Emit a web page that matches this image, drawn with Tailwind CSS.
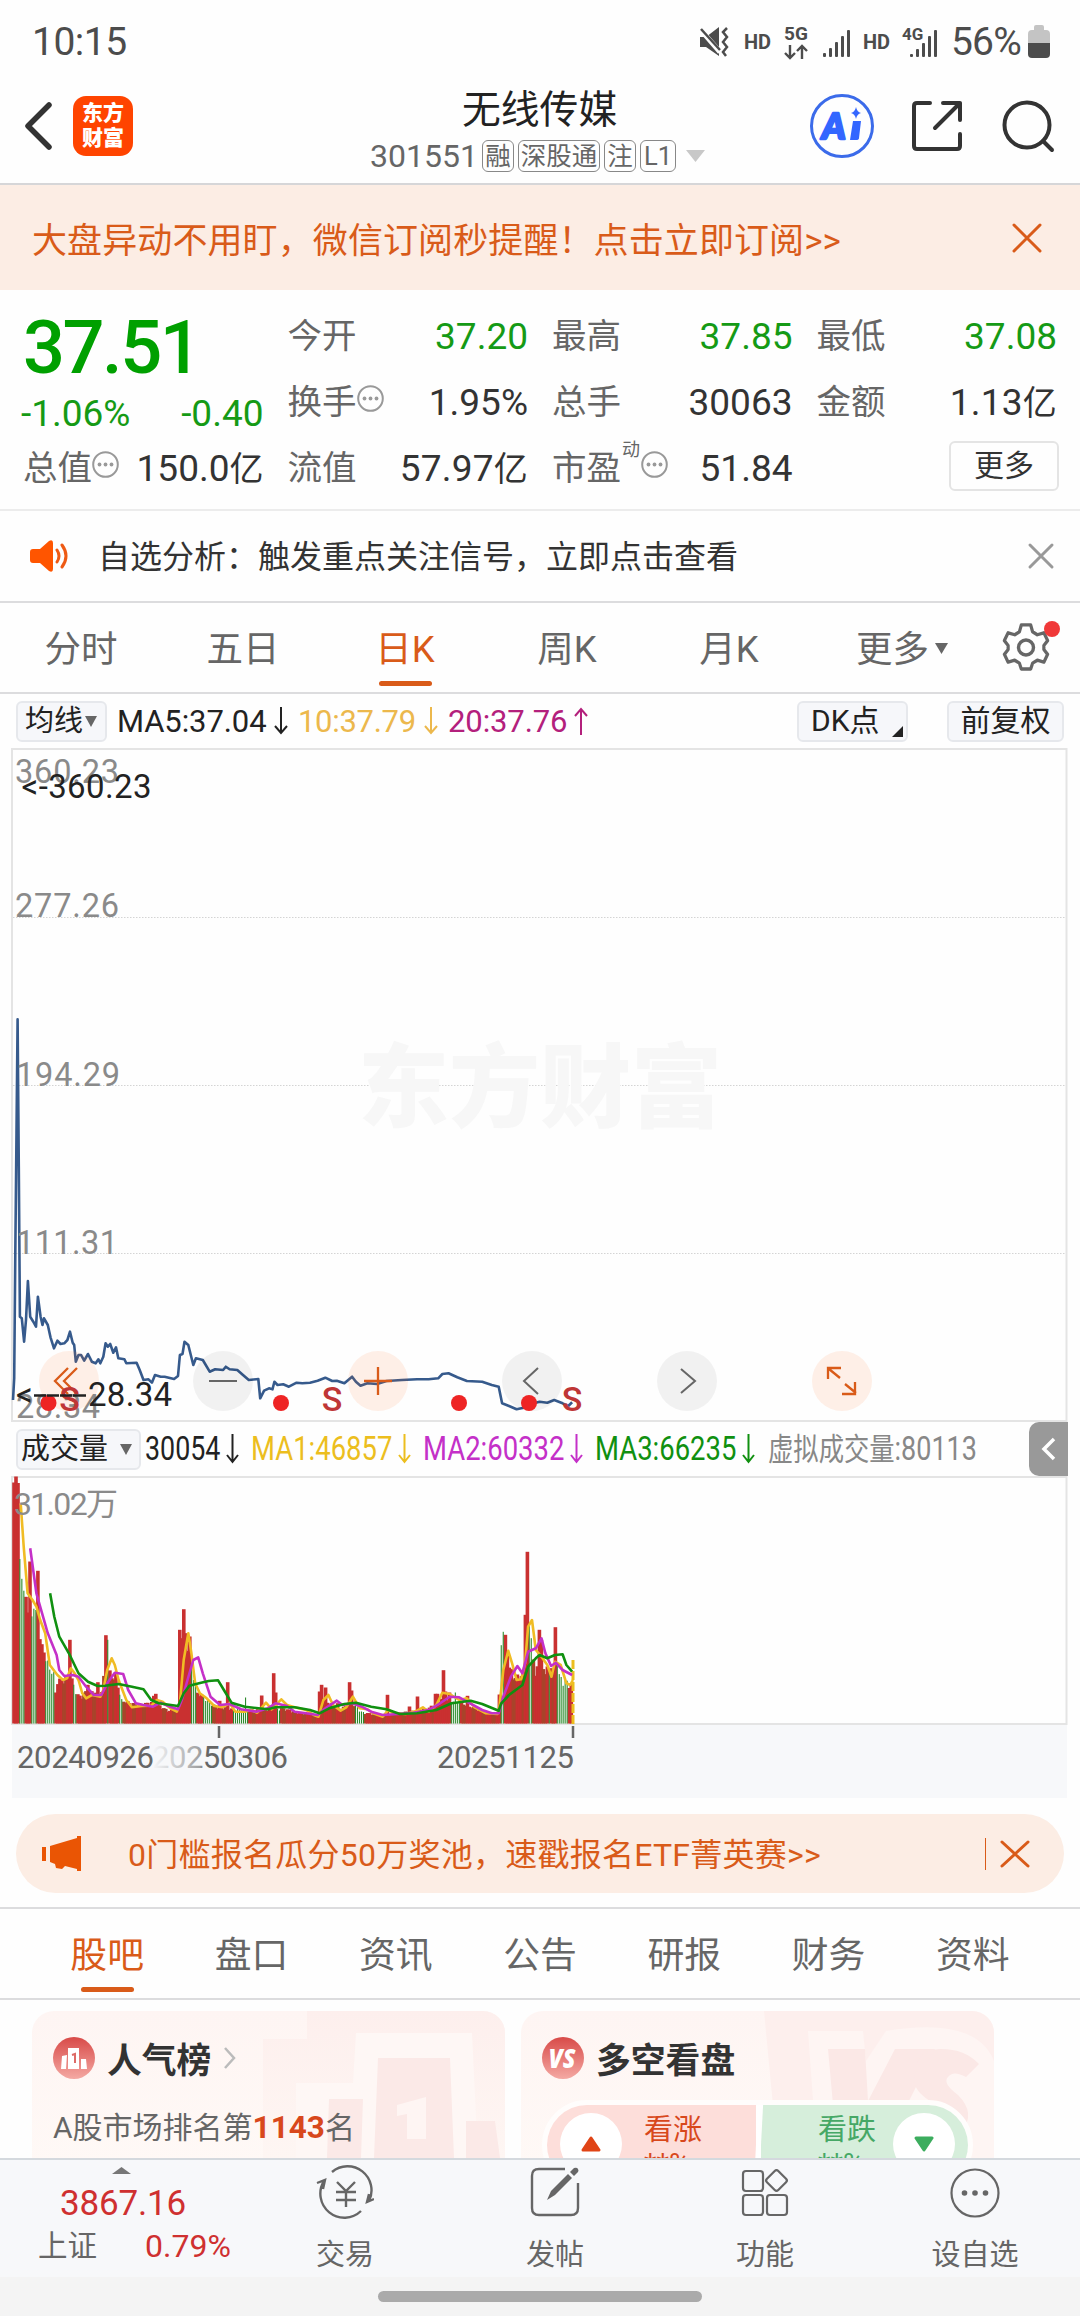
<!DOCTYPE html>
<html lang="zh-CN">
<head>
  <meta charset="UTF-8" />
  <meta name="viewport" content="width=device-width, initial-scale=1.0" />
  <title>无线传媒 301551</title>
  <script src="https://cdn.jsdelivr.net/npm/@tailwindcss/browser@4"></script>
</head>
<body class="w-[1080px] h-[2316px] overflow-hidden flex flex-col bg-[#fefefe] text-[#333] font-['Roboto','Noto_Sans_CJK_SC',sans-serif] leading-none whitespace-nowrap">

  <!-- Statusleiste -->
  <div class="h-[66px] shrink-0 flex items-start justify-between pl-8 pr-[30px] text-[#4c4c4c]">
    <div class="text-[39px] leading-[44px] mt-[20px] tracking-[-0.5px]">10:15</div>
    <div class="flex items-start">
      <svg class="w-[32px] h-[32px] mt-[26px] mr-[2px]" viewBox="0 0 32 32" fill="none" stroke="#4c4c4c">
        <path d="M1 11h6L20 1v29L7 21H1z" fill="#4c4c4c" stroke="none"/>
        <path d="M0 2l21 24" stroke="#fefefe" stroke-width="5"/>
        <path d="M2 3l19 21" stroke-width="2.5"/>
        <path d="M28 2l-4 4 4 5-4 5 4 5-4 5 3 4" stroke-width="2.5"/>
      </svg>
      <div class="ml-[11px] w-[28px] text-[20px] font-bold leading-6 mt-[30px]">HD</div>
      <div class="ml-[12px] w-[26px] mt-[26px]">
        <div class="text-[19px] font-bold leading-4">5G</div>
        <svg class="w-6 h-4 mt-[2px]" viewBox="0 0 24 16" fill="none" stroke="#4c4c4c" stroke-width="2.4"><path d="M6 1v13M1 9l5 5 5-5M18 15V2M13 7l5-5 5 5"/></svg>
      </div>
      <svg class="ml-[13px] w-[28px] h-[28px] mt-[30px]" viewBox="0 0 28 28" fill="#4c4c4c"><rect x="0" y="23" width="3" height="4" rx="1"/><rect x="6" y="18" width="3" height="9" rx="1"/><rect x="12" y="12" width="3" height="15" rx="1"/><rect x="18" y="6" width="3" height="21" rx="1"/><rect x="24" y="0" width="3" height="27" rx="1"/></svg>
      <div class="ml-[12px] w-[28px] text-[20px] font-bold leading-6 mt-[30px]">HD</div>
      <div class="relative ml-[11px] w-[37px] h-[58px]">
        <div class="absolute left-0 top-[26px] text-[17px] font-bold leading-4">4G</div>
        <svg class="absolute left-[8px] top-[30px] w-[28px] h-[28px]" viewBox="0 0 28 28" fill="#4c4c4c"><rect x="0" y="24" width="3" height="3" rx="1"/><rect x="6" y="19" width="3" height="8" rx="1"/><rect x="12" y="13" width="3" height="14" rx="1"/><rect x="18" y="6" width="3" height="21" rx="1"/><rect x="24" y="0" width="3" height="27" rx="1"/></svg>
      </div>
      <div class="ml-[12px] w-[77px] text-[39px] leading-[44px] mt-[20px] tracking-[-0.8px]">56%</div>
      <svg class="w-[22px] h-[34px] mt-[25px]" viewBox="0 0 22 34"><path d="M6 2q0-2 2-2h6q2 0 2 2v3h2q4 0 4 4v9H0V9q0-4 4-4h2z" fill="#c4c4c4"/><path d="M0 18h22v11q0 4-4 4H4q-4 0-4-4z" fill="#4c4c4c"/></svg>
    </div>
  </div>

  <!-- Kopfzeile -->
  <div class="h-[119px] shrink-0 relative flex items-start justify-between pl-[23px] pr-[25px] border-b-2 border-[#d6d6d8]">
    <div class="flex items-center mt-[30px] h-[60px]">
      <svg class="w-[29px] h-[50px]" viewBox="0 0 29 50" fill="none" stroke="#333" stroke-width="5.5" stroke-linecap="round" stroke-linejoin="round"><path d="M26 4L5 25l21 21"/></svg>
      <div class="ml-[21px] w-[60px] h-[60px] rounded-[13px] bg-[#ff4400] text-white text-[21px] font-black leading-[25px] text-center pt-[5px]">东方<br>财富</div>
    </div>
    <div class="absolute left-[370px] top-[22px]">
      <div class="ml-[92px] text-[38.8px] leading-[44px] text-[#222]">无线传媒</div>
      <div class="flex items-center mt-[6px] h-[36px] text-[#666]">
        <div class="text-[32px] w-[112px]">301551</div>
        <div class="flex gap-[4px] text-[25.500px]">
          <span class="border-[1.5px] border-[#888] rounded-md w-[32px] h-[32px] leading-[30px] text-center">融</span>
          <span class="border-[1.5px] border-[#888] rounded-md w-[82px] h-[32px] leading-[30px] text-center">深股通</span>
          <span class="border-[1.5px] border-[#888] rounded-md w-[32px] h-[32px] leading-[30px] text-center">注</span>
          <span class="border-[1.5px] border-[#888] rounded-md w-[36px] h-[32px] leading-[30px] text-center">L1</span>
        </div>
        <svg class="ml-[10px] w-[19px] h-[12px]" viewBox="0 0 19 12"><path d="M0 0h19l-9.500 12z" fill="#c8c8c8"/></svg>
      </div>
    </div>
    <div class="flex items-center mt-[26px] h-[68px]">
      <svg class="w-[66px] h-[66px]" viewBox="0 0 66 66">
        <circle cx="33" cy="33" r="30.500" fill="none" stroke="#3b6bea" stroke-width="3"/>
        <text x="13" y="46" font-family="Lato, sans-serif" font-weight="900" font-style="italic" font-size="36" fill="#3366ff" stroke="#3366ff" stroke-width="2.500" stroke-linejoin="round">A</text>
        <path d="M44 28h8l-2 17q0 2-3 2h-6z" fill="#3366ff"/>
        <path d="M47 14q1 5 5 6-4 1-5 6-1-5-5-6 4-1 5-6z" fill="#3366ff"/>
      </svg>
      <svg class="ml-[36px] w-[52px] h-[52px]" viewBox="0 0 52 52" fill="none" stroke="#333" stroke-width="4" stroke-linecap="round" stroke-linejoin="round"><path d="M19 3H6Q3 3 3 6v40q0 3 3 3h40q3 0 3-3V34M32 3h17v17M49 3L24 28"/></svg>
      <svg class="ml-[38px] w-[54px] h-[54px]" viewBox="0 0 54 54" fill="none" stroke="#333" stroke-width="4" stroke-linecap="round"><circle cx="26" cy="26" r="22.500"/><path d="M42 42l9 9"/></svg>
    </div>
  </div>

  <!-- Hinweisbanner -->
  <div class="h-[105px] shrink-0 flex items-center justify-between bg-[#fcede4] pl-[32px] pr-[38px] text-[#d95b19]">
    <div class="pt-2 text-[35px] tracking-[0.1px]">大盘异动不用盯，微信订阅秒提醒！点击立即订阅&gt;&gt;</div>
    <svg class="w-[30px] h-[30px]" viewBox="0 0 30 30" stroke="#d95b19" stroke-width="3" stroke-linecap="round"><path d="M2 2l26 26M28 2L2 28"/></svg>
  </div>

  <!-- Kursdaten -->
  <div class="h-[221px] shrink-0 flex gap-[24px] px-[23px] pt-[13px] border-b-2 border-[#ececec] text-[37px]">
    <div class="w-[241px]">
      <div class="h-[89px] pt-[5px] text-[74px] font-medium leading-[80px] text-[#00a000] tracking-[-2.500px]">37.51</div>
      <div class="h-[43px] flex items-center justify-between text-[#159a15] -ml-[2px]"><span>-1.06%</span><span>-0.40</span></div>
      <div class="h-[66px] flex items-center justify-between">
        <span class="flex items-center text-[34.500px] text-[#666]">总值<svg class="mb-2 w-[27px] h-[27px]" viewBox="0 0 27 27" fill="#999"><circle cx="13.500" cy="13.500" r="12.300" fill="none" stroke="#999" stroke-width="2"/><circle cx="7.500" cy="13.500" r="1.900"/><circle cx="13.500" cy="13.500" r="1.900"/><circle cx="19.500" cy="13.500" r="1.900"/></svg></span>
        <span>150.0<span class="text-[34px]">亿</span></span>
      </div>
    </div>
    <div class="w-[241px]">
      <div class="h-[66px] flex items-center justify-between"><span class="text-[34.500px] text-[#666]">今开</span><span class="text-[#159a15]">37.20</span></div>
      <div class="h-[66px] flex items-center justify-between">
        <span class="flex items-center text-[34.500px] text-[#666]">换手<svg class="mb-2 w-[27px] h-[27px]" viewBox="0 0 27 27" fill="#999"><circle cx="13.500" cy="13.500" r="12.300" fill="none" stroke="#999" stroke-width="2"/><circle cx="7.500" cy="13.500" r="1.900"/><circle cx="13.500" cy="13.500" r="1.900"/><circle cx="19.500" cy="13.500" r="1.900"/></svg></span>
        <span>1.95%</span>
      </div>
      <div class="h-[66px] flex items-center justify-between"><span class="text-[34.500px] text-[#666]">流值</span><span class="tracking-[0.2px]">57.97<span class="text-[34px]">亿</span></span></div>
    </div>
    <div class="w-[241px]">
      <div class="h-[66px] flex items-center justify-between"><span class="text-[34.500px] text-[#666]">最高</span><span class="text-[#159a15]">37.85</span></div>
      <div class="h-[66px] flex items-center justify-between"><span class="text-[34.500px] text-[#666]">总手</span><span>30063</span></div>
      <div class="h-[66px] flex items-center justify-between">
        <span class="flex items-center text-[34.500px] text-[#666]">市盈<span class="text-[18px] mb-9 ml-[1px]">动</span><svg class="ml-[1px] mb-2 w-[27px] h-[27px]" viewBox="0 0 27 27" fill="#999"><circle cx="13.500" cy="13.500" r="12.300" fill="none" stroke="#999" stroke-width="2"/><circle cx="7.500" cy="13.500" r="1.900"/><circle cx="13.500" cy="13.500" r="1.900"/><circle cx="19.500" cy="13.500" r="1.900"/></svg></span>
        <span>51.84</span>
      </div>
    </div>
    <div class="w-[241px]">
      <div class="h-[66px] flex items-center justify-between"><span class="text-[34.500px] text-[#666]">最低</span><span class="text-[#159a15]">37.08</span></div>
      <div class="h-[66px] flex items-center justify-between"><span class="text-[34.500px] text-[#666]">金额</span><span class="tracking-[0.2px]">1.13<span class="text-[34px]">亿</span></span></div>
      <div class="h-[66px] flex items-center justify-end"><button class="w-[110px] h-[50px] mb-1 -mr-[2px] border-2 border-[#e4e4e4] rounded-md text-[30px] leading-[46px]">更多</button></div>
    </div>
  </div>

  <!-- Analyse -->
  <div class="h-[92px] shrink-0 flex items-center pl-[29px] pr-[25px] border-b-2 border-[#dcdcde]">
    <svg class="w-[40px] h-[34px]" viewBox="0 0 40 34" fill="#ff5500"><path d="M4 10h7L20 2q4-2 4 2v26q0 4-4 2l-9-8H4q-3 0-3-3v-8q0-3 3-3z"/><path d="M28 11q4 6 0 12M33 6q8 11 0 22" fill="none" stroke="#ee5a14" stroke-width="3" stroke-linecap="round"/></svg>
    <div class="ml-[29px] pt-[2px] text-[32px]">自选分析：触发重点关注信号，立即点击查看</div>
    <svg class="ml-auto w-[28px] h-[28px]" viewBox="0 0 28 28" stroke="#999" stroke-width="3" stroke-linecap="round"><path d="M3 3l22 22M25 3L3 25"/></svg>
  </div>

  <!-- Zeitraum-Tabs -->
  <div class="h-[91px] shrink-0 flex items-start border-b-2 border-[#dcdcde] text-[36.500px] text-[#666]">
    <div class="w-[162px] leading-[94px] text-center">分时</div>
    <div class="w-[162px] leading-[94px] text-center">五日</div>
    <div class="w-[162px] text-center text-[#d95b19]">
      <div class="h-[78px] leading-[94px]">日K</div>
      <div class="mx-auto w-[53px] h-[5px] rounded-full bg-[#d95b19]"></div>
    </div>
    <div class="w-[162px] leading-[94px] text-center">周K</div>
    <div class="w-[162px] leading-[94px] text-center">月K</div>
    <div class="w-[184px] h-[94px] flex items-center justify-center">更多<svg class="ml-[6px] mb-1 w-[13px] h-[11px]" viewBox="0 0 13 11"><path d="M0 0h13L6.500 11z" fill="#666"/></svg></div>
    <div class="relative mt-[19px] w-[56px] h-[50px] ml-[7px]">
      <svg class="w-[50px] h-[50px]" viewBox="0 0 50 50" fill="none" stroke="#666" stroke-width="3.400" stroke-linejoin="round">
        <path d="M20 3h10l2 7 5 3 7-2 4 8-4 5v4l4 5-4 8-7-2-5 3-2 6H20l-2-6-5-3-7 2-4-8 4-5v-4l-4-5 4-8 7 2 5-3z" transform="translate(1.500 0) scale(.94 .98)"/>
        <circle cx="25" cy="25.500" r="7.500"/>
      </svg>
      <div class="absolute left-[43px] -top-[1px] w-4 h-4 rounded-full bg-[#f03838]"></div>
    </div>
  </div>

  <!-- MA-Zeile -->
  <div class="h-[54px] shrink-0 flex items-center pl-[16px] pr-[16px] text-[31px]">
    <div class="w-[91px] h-[41px] flex items-center pl-[7px] border-2 border-[#e6e8ec] rounded-md bg-[#f6f7fa] text-[29px] text-[#222]">均线<svg class="ml-[2px] w-[12px] h-[11px]" viewBox="0 0 12 11"><path d="M0 0h12L6 11z" fill="#666"/></svg></div>
    <div class="ml-[10px] w-[157px] text-[#222] tracking-[-0.1px]">MA5:37.04</div>
    <svg class="w-[14px] h-[28px]" viewBox="0 0 14 28" fill="none" stroke="#222" stroke-width="2"><path d="M7 0v26M1 19l6 7 6-7"/></svg>
    <div class="ml-[10px] w-[126px] text-[#ecb84c] tracking-[-0.3px]">10:37.79</div>
    <svg class="w-[14px] h-[28px]" viewBox="0 0 14 28" fill="none" stroke="#ecb84c" stroke-width="2"><path d="M7 0v26M1 19l6 7 6-7"/></svg>
    <div class="ml-[10px] w-[126px] text-[#b3207c] tracking-[-0.1px]">20:37.76</div>
    <svg class="w-[14px] h-[28px]" viewBox="0 0 14 28" fill="none" stroke="#b3207c" stroke-width="2"><path d="M7 28V2M1 9l6-7 6 7"/></svg>
    <div class="ml-auto relative w-[111px] h-[41px] flex items-center pl-[12px] border-2 border-[#e6e8ec] rounded-md bg-[#f6f7fa] text-[30px] text-[#222]">DK点<svg class="absolute right-[3px] bottom-[3px] w-[11px] h-[11px]" viewBox="0 0 11 11"><path d="M11 0v11H0z" fill="#222"/></svg></div>
    <div class="ml-[39px] w-[117px] h-[41px] flex items-center justify-center border-2 border-[#e6e8ec] rounded-md bg-[#f6f7fa] text-[30px] text-[#222]">前复权</div>
  </div>

  <!-- Kurschart -->
  <svg class="block w-[1080px] h-[674px] shrink-0" viewBox="0 748 1080 674">
    <rect x="12" y="749" width="1054.500" height="672" fill="none" stroke="#e4e4e4" stroke-width="2"/>
    <g stroke="#d4d4d4" stroke-width="1" stroke-dasharray="1.500 1.500"><path d="M13 917.500H1066M13 1085.500H1066M13 1253.500H1066"/></g>
    <text x="358" y="1120" font-size="91" font-weight="900" fill="#f7f7f7">东方财富</text>
    <polyline id="price" fill="none" stroke="#365a8c" stroke-width="2.600" stroke-linejoin="round"/>
    <g>
      <circle cx="69" cy="1381" r="30" fill="#ff6a20" fill-opacity=".1"/>
      <circle cx="223" cy="1381" r="30" fill="#000" fill-opacity=".05"/>
      <circle cx="378" cy="1381" r="30" fill="#ff6a20" fill-opacity=".1"/>
      <circle cx="532" cy="1381" r="30" fill="#000" fill-opacity=".05"/>
      <circle cx="687" cy="1381" r="30" fill="#000" fill-opacity=".05"/>
      <circle cx="842" cy="1381" r="30" fill="#ff6a20" fill-opacity=".1"/>
    </g>
    <g fill="none" stroke="#d95b19" stroke-width="2.300">
      <path d="M68 1368l-13 13 13 13M77 1368l-13 13 13 13"/>
      <path d="M364 1381h28M378 1367v28"/>
      <path d="M840 1378L829 1369M828 1379v-11h13M845 1384l11 9M855 1382v12h-13"/>
    </g>
    <g fill="none" stroke="#666" stroke-width="2"><path d="M209 1381h28M538 1368l-14 13 14 13M681 1369l14 12-14 12"/></g>
    <g font-size="32.500" fill="#8a8a8a">
      <text x="15" y="783" textLength="104">360.23</text>
      <text x="15" y="917" textLength="104">277.26</text>
      <text x="16" y="1086" textLength="104">194.29</text>
      <text x="16" y="1254" textLength="102">111.31</text>
      <text x="16" y="1417.500" textLength="84">28.34</text>
    </g>
    <g fill="#ee2424"><circle cx="48.500" cy="1403" r="8"/><circle cx="281" cy="1403" r="8"/><circle cx="459" cy="1403" r="8"/><circle cx="529" cy="1403" r="8"/></g>
    <g font-size="34" font-weight="500" fill="#bf3636" text-anchor="middle"><text x="69.500" y="1410.500">S</text><text x="332" y="1410.500">S</text><text x="572" y="1410.500">S</text></g>
    <g font-size="33" fill="#222">
      <text x="21.500" y="798" textLength="130">&lt;-360.23</text>
      <text x="16" y="1405.500">&lt;</text>
      <path d="M34 1395.500h12M47 1395.500h12M60 1395.500h12M73 1395.500h13" stroke="#222" stroke-width="2.500"/>
      <text x="88" y="1405.500" textLength="84">28.34</text>
    </g>
  </svg>

  <!-- Volumenzeile -->
  <div class="h-[54px] shrink-0 flex items-center pl-[16px] text-[32.500px]">
    <div class="w-[125px] h-[41px] flex items-center pl-[3px] border-2 border-[#e6e8ec] rounded-md bg-[#f6f7fa] text-[29px] text-[#222]">成交量<svg class="ml-[12px] w-[12px] h-[11px]" viewBox="0 0 12 11"><path d="M0 0h12L6 11z" fill="#666"/></svg></div>
    <div class="ml-[4px] w-[81px] text-[#222]"><div class="origin-left scale-x-[0.825]">30054</div></div>
    <svg class="w-[13px] h-[30px]" viewBox="0 0 13 30" fill="none" stroke="#222" stroke-width="2"><path d="M6.500 0v28M1 21l5.500 7 5.500-7"/></svg>
    <div class="ml-[12px] w-[147px] text-[#ecbe1e]"><div class="origin-left scale-x-[0.845]">MA1:46857</div></div>
    <svg class="w-[13px] h-[30px]" viewBox="0 0 13 30" fill="none" stroke="#ecbe1e" stroke-width="2"><path d="M6.500 0v28M1 21l5.500 7 5.500-7"/></svg>
    <div class="ml-[12px] w-[147px] text-[#c430c8]"><div class="origin-left scale-x-[0.845]">MA2:60332</div></div>
    <svg class="w-[13px] h-[30px]" viewBox="0 0 13 30" fill="none" stroke="#c430c8" stroke-width="2"><path d="M6.500 0v28M1 21l5.500 7 5.500-7"/></svg>
    <div class="ml-[12px] w-[147px] text-[#109010]"><div class="origin-left scale-x-[0.845]">MA3:66235</div></div>
    <svg class="w-[13px] h-[30px]" viewBox="0 0 13 30" fill="none" stroke="#109010" stroke-width="2"><path d="M6.500 0v28M1 21l5.500 7 5.500-7"/></svg>
    <div class="ml-[13px] w-[210px] text-[#888]"><div class="origin-left scale-x-[0.83]"><span class="text-[30.500px]">虚拟成交量</span>:80113</div></div>
    <div class="ml-auto mr-[12px] w-[39px] h-[54px] shrink-0 rounded-l-[10px] bg-[#999] flex items-center justify-center"><svg class="w-[15px] h-[24px]" viewBox="0 0 15 24" fill="none" stroke="#fff" stroke-width="3.500"><path d="M13 2L3 12l10 10"/></svg></div>
  </div>

  <!-- Volumenchart -->
  <svg class="block w-[1080px] h-[249px] shrink-0" viewBox="0 1476 1080 249">
    <rect x="12" y="1477" width="1054.500" height="247" fill="none" stroke="#e4e4e4" stroke-width="2"/>
    <g id="bars"></g>
    <path d="M573 1660v64" stroke="#ecbe1e" stroke-width="3" stroke-dasharray="9 2"/>
    <g fill="none" stroke-width="2.600" stroke-linejoin="round">
      <polyline id="ma1" stroke="#f0bc24"/>
      <polyline id="ma2" stroke="#c430c8"/>
      <polyline id="ma3" stroke="#109010"/>
    </g>
    <text x="14" y="1515" font-size="32" fill="#8a8a8a" textLength="104">31.02万</text>
  </svg>

  <!-- Datumsachse -->
  <div class="h-[73px] shrink-0 ml-[12px] w-[1055px] bg-[#f7f8fa]">
    <svg class="block w-[1055px] h-[73px]" viewBox="12 1725 1055 73">
      <defs><linearGradient id="fade" x1="0" x2="1"><stop offset="0" stop-color="#666" stop-opacity="0"/><stop offset=".35" stop-color="#666" stop-opacity=".6"/><stop offset=".4" stop-color="#666"/></linearGradient></defs>
      <path d="M219 1726v12M573 1726v12" stroke="#666" stroke-width="2.500"/>
      <g font-size="31" fill="#666">
        <text x="17" y="1768" textLength="137">20240926</text>
        <text x="152" y="1768" textLength="136" fill="url(#fade)">20250306</text>
        <text x="437" y="1768" textLength="137">20251125</text>
      </g>
    </svg>
  </div>

  <!-- Aktion -->
  <div class="mt-[16px] mx-[16px] h-[79px] shrink-0 rounded-full bg-[#fcede4] flex items-center pl-[25px] pr-[34px] text-[#d95b19]">
    <svg class="w-[41px] h-[36px]" viewBox="0 0 41 36" fill="#ea5504"><rect x="1" y="11" width="4" height="14"/><path d="M9 10L36 2V0h4v35h-4v-2l-12-3-3 3-6-1-1-4-5-2z"/></svg>
    <div class="ml-[46px] pt-[2px] text-[32px] tracking-[0.25px]">0门槛报名瓜分50万奖池，速戳报名ETF菁英赛&gt;&gt;</div>
    <div class="ml-auto w-[1.500px] h-[32px] bg-[#d95b19]"></div>
    <svg class="ml-[14px] w-[30px] h-[28px]" viewBox="0 0 30 28" stroke="#d95b19" stroke-width="3" stroke-linecap="round"><path d="M2 2l26 24M28 2L2 26"/></svg>
  </div>

  <!-- Inhalts-Tabs -->
  <div class="mt-[14px] h-[93px] shrink-0 flex px-[35px] border-y-2 border-[#dcdcde] text-[36.800px] text-[#666] text-center leading-[93px]">
    <div class="flex-1 text-[#d95b19]">
      <div class="h-[78px]">股吧</div>
      <div class="mx-auto w-[53px] h-[5px] rounded-full bg-[#d95b19]"></div>
    </div>
    <div class="flex-1">盘口</div>
    <div class="flex-1">资讯</div>
    <div class="flex-1">公告</div>
    <div class="flex-1">研报</div>
    <div class="flex-1">财务</div>
    <div class="flex-1">资料</div>
  </div>

  <!-- Karten -->
  <div class="h-[158px] shrink-0 overflow-hidden flex gap-4 pl-[32px] pt-[11px]">
    <div class="relative w-[473px] h-[200px] shrink-0 rounded-[22px] bg-linear-to-b from-[#fef5f3] to-[#fffaf7] overflow-hidden">
      <svg class="absolute left-0 top-0 w-[473px] h-[147px]" viewBox="0 0 473 147">
        <defs><linearGradient id="soft" x2="0" y2="1"><stop stop-color="#fdefed"/><stop offset="1" stop-color="#fef6f3"/></linearGradient></defs>
        <path d="M275 0h198v147H231V28h44z" fill="url(#soft)"/>
        <path d="M264 147V72h57l3-50h116l6 125z" fill="#fef7f5"/>
        <path d="M295 147l2-59h34l-2 59zM342 147l4-100h72l4 100zM434 147v-37h29l5 37z" fill="#fbe9e7"/>
        <path d="M365 94l29-8v42h-19v-25l-10 2z" fill="#fef5f3"/>
      </svg>
      <div class="relative pl-[21px] pt-[26px] flex items-center">
        <svg class="w-[42px] h-[42px]" viewBox="0 0 42 42"><defs><linearGradient id="red" x2="0" y2="1"><stop stop-color="#d84a48"/><stop offset="1" stop-color="#f4a9a3"/></linearGradient></defs><circle cx="21" cy="21" r="21" fill="url(#red)"/><path d="M9 19l5-1-1 14H8zM15 11h11v21H15zM28 22h5l1 10h-6z" fill="#fff"/><path d="M19 18l3-1v9" fill="none" stroke="#dd6a66" stroke-width="2"/></svg>
        <div class="ml-[12px] pt-[5px] -mb-[1px] text-[34.800px] leading-[38px] font-bold">人气榜</div>
        <svg class="ml-[13px] w-[12px] h-[22px]" viewBox="0 0 12 22" fill="none" stroke="#bbb" stroke-width="2.500"><path d="M1 1l9 10-9 10"/></svg>
      </div>
      <div class="relative pl-[21px] mt-[31px] text-[30px] leading-[36px] text-[#666]">A股市场排名第<span class="font-bold text-[#d8481c] text-[31.500px]">1143</span>名</div>
    </div>
    <div class="relative w-[473px] h-[200px] shrink-0 rounded-[22px] bg-linear-to-b from-[#fef5f3] to-[#fffaf7] overflow-hidden">
      <svg class="absolute left-0 top-0 w-[473px] h-[200px]" viewBox="0 0 473 200">
        <path d="M243 0h230v200H262z" fill="#fdefed"/>
        <path d="M287 20h55l3 30 20-30q90-15 108 30v150H300z" fill="#fef5f3"/>
        <path d="M307 38h37l3 52 27-52h40l-50 100h-48z" fill="#fbe8e6"/>
        <path d="M458 53q-14-15-38-15-27 0-27 30 0 12 16 22 14 7 6 14-5 6-22 0l-10 22q36 14 58-6 14-18-4-36-16-12-10-18 5-7 18 0z" fill="#fbe8e6"/>
      </svg>
      <div class="relative pl-[21px] pt-[26px] flex items-center">
        <svg class="w-[42px] h-[42px]" viewBox="0 0 42 42"><circle cx="21" cy="21" r="21" fill="url(#red)"/><text x="20" y="31" text-anchor="middle" font-family="Open Sans, sans-serif" font-size="26" font-weight="800" font-style="italic" textLength="27" lengthAdjust="spacingAndGlyphs" fill="#fff">VS</text></svg>
        <div class="ml-[12px] pt-[5px] -mb-[1px] text-[34.800px] leading-[38px] font-bold">多空看盘</div>
      </div>
      <!-- Abstimmung, wird von der unteren Leiste angeschnitten -->
      <div class="absolute left-[21px] top-[89px] w-[431px] h-[90px] rounded-full border-[5px] border-[#fffdfc] flex overflow-hidden bg-white text-[29px]">
        <div class="w-[209px] flex pl-[13px] pt-[8px] bg-[#fddeda] text-[#d8481c]">
          <div class="w-[62px] h-[62px] rounded-full bg-white flex items-center justify-center"><svg class="w-[20px] h-[16px]" viewBox="0 0 20 16"><path d="M10 2l8 12H2z" fill="#e04416" stroke="#e04416" stroke-width="3" stroke-linejoin="round"/></svg></div>
          <div class="ml-[22px] leading-[34px]">看涨<br>**%</div>
        </div>
        <div class="w-[5px] bg-white skew-x-[-3deg]"></div>
        <div class="flex-1 flex justify-end pr-[13px] pt-[8px] bg-[#d6eedb] text-[#46a866]">
          <div class="mr-[17px] leading-[34px]">看跌<br>**%</div>
          <div class="w-[62px] h-[62px] rounded-full bg-white flex items-center justify-center"><svg class="w-[20px] h-[16px]" viewBox="0 0 20 16"><path d="M10 14l8-12H2z" fill="#3cad5e" stroke="#3cad5e" stroke-width="3" stroke-linejoin="round"/></svg></div>
        </div>
      </div>
    </div>
  </div>

  <!-- Untere Leiste -->
  <div class="h-[119px] shrink-0 flex border-t-2 border-[#d4d9de] bg-[#f7f8fa] text-[#666]">
    <div class="w-[240px] flex flex-col">
      <svg class="ml-[112px] mt-[7px] w-[19px] h-[7px]" viewBox="0 0 19 7"><path d="M0 7L9.500 0 19 7z" fill="#777"/></svg>
      <div class="ml-[60px] mt-[10px] text-[35px] leading-[40px] text-[#cf3030] tracking-[-0.2px]">3867.16</div>
      <div class="ml-[38px] mt-[4px] w-[195px] flex leading-[36px]"><span class="text-[29.500px]">上证</span><span class="ml-[48px] text-[32px] text-[#cf3030]">0.79%</span></div>
    </div>
    <div class="w-[210px] flex flex-col items-center pt-[5px]">
      <svg class="w-[58px] h-[54px]" viewBox="0 0 58 54" fill="none" stroke="#666" stroke-width="2.400"><path d="M16 7A24 24 0 0 1 53 36M45 46A24 24 0 0 1 8 16M1 18l8-3-2 9M58 34l-7 3 2-8"/><path d="M21 17l9 9 9-9M20 27h20M20 35h20M30 26v16"/></svg>
      <div class="mt-[18px] text-[29px] leading-[36px]">交易</div>
    </div>
    <div class="w-[210px] flex flex-col items-center pt-[5px]">
      <svg class="w-[50px] h-[54px]" viewBox="0 0 50 54"><path d="M35 4H9Q2 4 2 11v32q0 7 7 7h32q7 0 7-7V18" fill="none" stroke="#666" stroke-width="2.400"/><path d="M17 35l4-9L38 9l4 4-17 17zM40 7l4-4q3-1 4 1t0 3l-4 4z" fill="#666"/></svg>
      <div class="mt-[18px] text-[29px] leading-[36px]">发帖</div>
    </div>
    <div class="w-[210px] flex flex-col items-center pt-[5px]">
      <svg class="w-[50px] h-[54px]" viewBox="0 0 50 54" fill="none" stroke="#666" stroke-width="2.200"><rect x="3" y="6" width="20" height="20" rx="3"/><rect x="3" y="30" width="20" height="20" rx="3"/><rect x="27" y="30" width="20" height="20" rx="3"/><rect x="28.500" y="7.500" width="16" height="16" rx="2.500" transform="rotate(45 36.500 15.500)"/></svg>
      <div class="mt-[18px] text-[29px] leading-[36px]">功能</div>
    </div>
    <div class="w-[210px] flex flex-col items-center pt-[5px]">
      <svg class="w-[50px] h-[54px]" viewBox="0 0 50 54" fill="#666"><circle cx="25" cy="28" r="23.500" fill="none" stroke="#666" stroke-width="2.200"/><circle cx="14.500" cy="28" r="2.800"/><circle cx="25" cy="28" r="2.800"/><circle cx="35.500" cy="28" r="2.800"/></svg>
      <div class="mt-[18px] text-[29px] leading-[36px]">设自选</div>
    </div>
  </div>
  <div class="flex-1 bg-[#f4f4f4] pt-[14px]"><div class="mx-auto w-[324px] h-[11px] rounded-full bg-[#aaa]"></div></div>

  <script>
    // Rohdaten der Linien: x in 1/2.613 px, y in 1/3 px
    const price = "34,1200 37,1135 40,760 43,400 46,58 49,500 52,950 57,955 63,1025 68,960 73,843 79,950 87,965 94,980 99,890 106,950 111,975 115,955 125,975 132,1012 141,1045 150,1022 158,1032 168,1030 176,1020 183,995 190,1028 194,1035 198,1085 205,1065 212,1065 220,1082 230,1062 240,1085 250,1090 257,1078 262,1090 270,1070 276,1030 282,1040 288,1032 296,1058 303,1042 309,1075 325,1078 330,1090 357,1088 365,1110 375,1140 388,1138 397,1148 405,1125 420,1130 430,1130 455,1137 465,1128 470,1065 477,1062 482,1025 492,1035 505,1095 512,1075 530,1080 548,1115 562,1108 583,1110 590,1100 600,1108 620,1110 635,1125 650,1140 675,1137 680,1195 690,1172 703,1165 712,1168 717,1145 725,1155 740,1153 755,1160 775,1148 790,1150 810,1148 830,1142 850,1133 868,1143 880,1142 900,1150 920,1130 930,1145 942,1157 960,1150 985,1152 1010,1143 1050,1140 1090,1138 1120,1138 1145,1135 1156,1122 1172,1120 1195,1132 1220,1143 1260,1145 1285,1155 1303,1160 1312,1210 1330,1218 1350,1228 1375,1222 1395,1210 1410,1205 1430,1208 1448,1200 1470,1210 1485,1218 1495,1207";
    const ma1 = "54,250 62,380 72,520 85,540 95,560 105,600 118,640 130,735 150,765 165,780 175,775 185,745 195,760 205,780 215,820 225,835 240,825 262,830 270,810 280,750 292,715 300,735 310,780 330,840 345,862 370,858 395,857 410,840 425,845 445,865 462,875 470,850 480,720 492,640 500,700 510,790 522,820 540,835 560,858 580,862 600,850 615,875 640,875 655,870 672,878 695,848 710,868 735,838 750,855 770,862 800,870 820,885 832,890 845,840 858,825 870,855 890,872 905,862 922,830 940,865 960,868 975,880 1000,890 1015,870 1030,880 1060,882 1090,872 1105,862 1120,875 1140,855 1156,818 1175,822 1200,840 1220,835 1240,862 1270,880 1300,882 1305,860 1315,750 1328,692 1338,730 1350,780 1362,778 1372,730 1380,620 1390,600 1400,690 1415,710 1430,735 1441,770 1450,725 1465,735 1480,790 1490,795 1497,780";
    const ma2 = "79,385 95,520 110,580 125,640 148,705 155,750 168,768 190,765 205,770 225,800 245,825 265,825 280,790 300,758 322,762 335,810 355,850 375,855 400,860 420,848 445,860 465,868 475,840 490,780 505,720 518,712 530,760 550,830 575,855 600,852 630,868 670,875 700,865 720,850 750,858 770,875 800,880 830,885 850,865 880,842 895,855 920,850 945,860 970,875 1000,885 1040,882 1080,878 1120,870 1150,850 1175,830 1200,832 1220,845 1260,870 1285,880 1303,880 1315,830 1335,770 1352,738 1365,760 1380,695 1400,685 1415,655 1425,700 1440,738 1452,728 1470,750 1495,765";
    const ma3 = "131,520 142,590 155,650 180,700 205,760 230,785 255,798 275,797 310,792 345,800 375,808 395,840 415,850 465,858 480,820 495,797 520,790 545,783 570,781 585,810 605,848 640,860 700,868 720,862 770,862 810,870 835,880 860,865 900,852 930,848 970,860 1010,868 1045,882 1090,880 1140,870 1180,850 1230,842 1260,852 1303,872 1310,850 1330,825 1365,795 1380,740 1400,715 1410,705 1430,715 1450,705 1470,703 1480,735 1495,755";
    function draw(id, raw, y0) {
      document.getElementById(id).setAttribute('points', raw.split(' ').map(p => {
        const [x, y] = p.split(',');
        return (x / 2.613).toFixed(1) + ',' + (y0 + y / 3).toFixed(1);
      }).join(' '));
    }
    draw('price', price, 1000);
    draw('ma1', ma1, 1420);
    draw('ma2', ma2, 1420);
    draw('ma3', ma3, 1420);

    // Grundverlauf des Volumens, dazu einzelne Spitzen
    const base = [[34,180],[48,250],[52,385],[58,528],[66,560],[90,580],[110,700],[125,740],[150,790],[185,780],[205,835],[225,820],[265,825],[275,750],[304,790],[318,845],[360,858],[400,850],[440,875],[465,870],[472,700],[495,690],[503,765],[515,820],[560,860],[605,868],[650,872],[700,872],[740,868],[780,880],[830,888],[840,830],[856,850],[890,870],[920,850],[945,878],[1000,890],[1050,880],[1120,868],[1150,840],[1200,850],[1250,872],[1303,884],[1308,700],[1325,740],[1345,780],[1366,770],[1385,690],[1400,740],[1430,760],[1450,760],[1470,785],[1497,800]];
    const spikes = {37:188,43:170,80:425,69:531,75:578,101:453,116:698,148:818,184:660,230:795,256:787,278:646,283:660,304:760,400:828,408:822,470:630,477:655,482:568,487:640,494:650,525:825,572:843,592:787,644:833,685:827,716:760,722:818,836:815,842:795,849:803,880:850,911:787,920:812,1010:825,1067:860,1088:830,1135:822,1141:822,1156:751,1165:815,1172:818,1192:818,1220:828,1308:676,1313:636,1318:645,1325:705,1370:585,1376:396,1381:610,1386:655,1397:768,1407:630,1413:660,1428:740,1440:745,1449:622,1455:735};
    const green = [[51,66],[78,95],[118,144],[188,203],[280,285],[312,320],[497,512],[528,556],[608,650],[720,732],[926,950],[1176,1204],[1305,1320],[1379,1393],[1431,1436],[1453,1484]];
    let greens = '', reds = '';
    for (let i = 0; i < 280; i++) {
      const x = 36 + i * 5.22;
      let k = 1;
      while (k < base.length - 1 && base[k][0] < x) k++;
      const [x0, y0] = base[k - 1], [x1, y1] = base[k];
      const t = Math.max(0, Math.min(1, (x - x0) / (x1 - x0)));
      let h = (911 - (y0 + (y1 - y0) * t)) * (0.9 + 0.2 * Math.abs(Math.sin(i * 7.3)));
      let spike = false;
      for (const s in spikes) if (Math.abs(s - x) <= 2.61) { h = 911 - spikes[s]; spike = true; }
      const top = 1723.5 - h / 3, px = x / 2.613;
      const isGreen = green.some(g => x >= g[0] && x <= g[1]);
      if (isGreen) greens += `<rect x="${(px - .5).toFixed(1)}" y="${top.toFixed(1)}" width="1.1" height="${(h / 3).toFixed(1)}" fill="#2c8a2c"/>`;
      else {
        const fill = !spike && i % 5 < 2 ? '#a8442a' : '#c93030';
        reds += `<rect x="${(px - 1.6).toFixed(1)}" y="${top.toFixed(1)}" width="3.6" height="${(h / 3).toFixed(1)}" fill="${fill}"/>`;
      }
    }
    document.getElementById('bars').innerHTML = reds + greens;
  </script>
</body>
</html>
